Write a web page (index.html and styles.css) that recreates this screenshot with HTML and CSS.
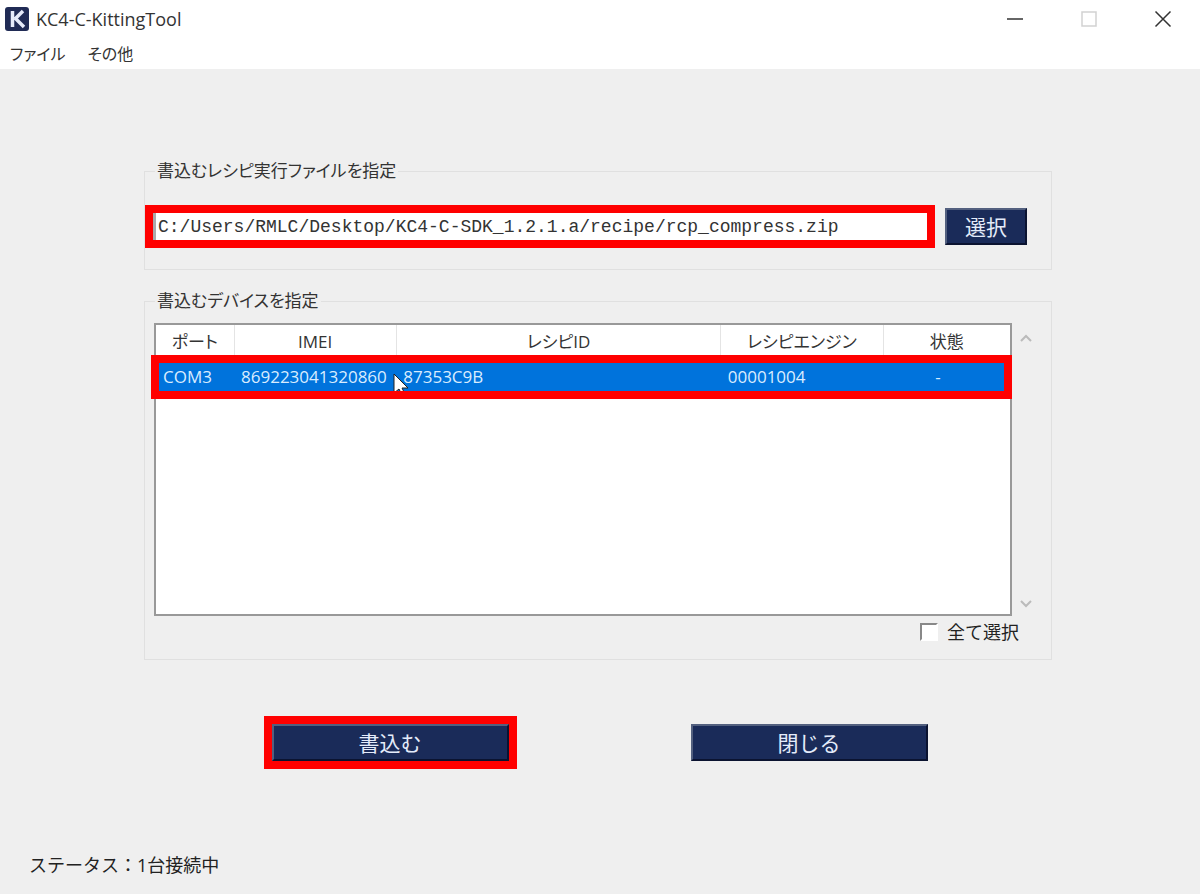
FILE: index.html
```html
<!DOCTYPE html>
<html lang="ja">
<head>
    <meta charset="UTF-8">
    <meta name="viewport" content="width=device-width, initial-scale=1.0">
    <title>KC4-C-KittingTool</title>
    <link rel="stylesheet" href="styles.css">
</head>
<body>
    <!-- Title bar -->
    <header class="titlebar">
        <svg class="app-icon" viewBox="0 0 26 26" aria-hidden="true">
            <rect x="1" y="1" width="24" height="24" rx="3" fill="#202b55"/>
            <path d="M8.500 5v16M19 5l-8 8M11 12l9 9" fill="none" stroke="#e6ebfa" stroke-width="3.500"/>
        </svg>
        <h1 class="title">KC4-C-KittingTool</h1>
        <div class="window-buttons">
            <button type="button" class="window-button" aria-label="最小化">
                <svg viewBox="0 0 18 18"><path d="M1 9h16" stroke="#333" stroke-width="1.500"/></svg>
            </button>
            <button type="button" class="window-button" aria-label="最大化" disabled>
                <svg viewBox="0 0 18 18"><rect x="2" y="2" width="14" height="14" fill="none" stroke="#d2d2d2" stroke-width="1.500"/></svg>
            </button>
            <button type="button" class="window-button" aria-label="閉じる">
                <svg viewBox="0 0 18 18"><path d="M1.500 1.500l15 15M16.500 1.500l-15 15" stroke="#333" stroke-width="1.500"/></svg>
            </button>
        </div>
    </header>
    <nav class="menubar">
        <button type="button" class="menu-item">ファイル</button>
        <button type="button" class="menu-item">その他</button>
    </nav>

    <main class="content">
        <!-- Recipe file -->
        <fieldset class="group">
            <legend>書込むレシピ実行ファイルを指定</legend>
            <div class="file-row">
                <div class="marked file-field">
                    <input type="text" class="file-input" aria-label="レシピ実行ファイル" value="C:/Users/RMLC/Desktop/KC4-C-SDK_1.2.1.a/recipe/rcp_compress.zip">
                </div>
                <button type="button" class="button button-select">選択</button>
            </div>
        </fieldset>

        <!-- Device list -->
        <fieldset class="group">
            <legend>書込むデバイスを指定</legend>
            <div class="device-area">
                <div class="device-list">
                    <table class="devices">
                        <thead>
                            <tr>
                                <th class="col-port">ポート</th>
                                <th class="col-imei">IMEI</th>
                                <th class="col-recipe">レシピID</th>
                                <th class="col-engine">レシピエンジン</th>
                                <th class="col-state">状態</th>
                            </tr>
                        </thead>
                        <tbody>
                            <tr class="selected">
                                <td>COM3</td>
                                <td>869223041320860</td>
                                <td>87353C9B
                                    <svg class="cursor" viewBox="0 0 16 22" aria-hidden="true"><path d="M1 1v19l5-4 3 6 3-1-3-6h6z" fill="#fff" stroke="#222" stroke-width="1"/></svg>
                                </td>
                                <td>00001004</td>
                                <td class="state">-</td>
                            </tr>
                        </tbody>
                    </table>
                    <div class="row-mark"></div>
                </div>
                <div class="scrollbar">
                    <svg viewBox="0 0 12 10"><path d="M1 8l5-5 5 5" fill="none" stroke="#bbb" stroke-width="2"/></svg>
                    <svg viewBox="0 0 12 10"><path d="M1 2l5 5 5-5" fill="none" stroke="#bbb" stroke-width="2"/></svg>
                </div>
            </div>
            <label class="select-all"><input type="checkbox">全て選択</label>
        </fieldset>

        <div class="actions">
            <div class="marked">
                <button type="button" class="button button-wide">書込む</button>
            </div>
            <button type="button" class="button button-wide">閉じる</button>
        </div>
    </main>

    <footer class="status">ステータス：1台接続中</footer>
</body>
</html>
```
FILE: styles.css
```css
* {
    box-sizing: border-box;
}
body {
    margin: 0;
    min-height: 100vh;
    display: flex;
    flex-direction: column;
    background-color: #efefef;
    color: #333;
    font-family: "Open Sans", "Noto Sans CJK JP", sans-serif;
    font-size: 18px;
    line-height: 26px;
}
button,
input {
    font-family: inherit;
    font-size: inherit;
    color: inherit;
}

/* Title bar and menu */
.titlebar {
    display: flex;
    align-items: center;
    height: 38px;
    padding-left: 4px;
    background-color: #fff;
}
.app-icon {
    width: 26px;
    height: 26px;
}
.title {
    margin: 0 0 0 6px;
    font-size: 18px;
    font-weight: 400;
}
.window-buttons {
    display: flex;
    margin-left: auto;
}
.window-button {
    display: flex;
    align-items: center;
    justify-content: center;
    width: 74px;
    height: 38px;
    padding: 0;
    border: none;
    background: none;
}
.window-button svg {
    width: 18px;
    height: 18px;
}
.menubar {
    display: flex;
    gap: 22px;
    height: 31px;
    padding-left: 10px;
    background-color: #fff;
}
.menu-item {
    padding: 0;
    border: none;
    background: none;
    font-size: 16px;
    line-height: 30px;
    font-feature-settings: "palt";
}

/* Groups */
.content {
    padding: 89px 148px 0 144px;
}
.group {
    min-width: 0;
    margin: 0 0 18px;
    padding: 0;
    border: 1px solid #e0e0e0;
}
.group legend {
    margin-left: 10px;
    padding: 0 2px;
    font-size: 17px;
    font-feature-settings: "palt";
}
.marked {
    border: 8px solid #f00;
}
.file-row {
    display: flex;
    align-items: center;
    gap: 10px;
    padding: 21px 24px 21px 0;
}
.file-field {
    flex: 1;
    display: flex;
}
.file-input {
    width: 100%;
    height: 27px;
    padding: 0 2px;
    border: none;
    border-left: 3px solid #aaa;
    background-color: #fff;
    font-family: "Liberation Mono", monospace;
}
.button {
    height: 37px;
    padding: 0;
    border: 2px solid;
    border-color: #53607f #0b1330 #0b1330 #53607f;
    background-color: #1a2b59;
    color: #e4ebfa;
    font-size: 21px;
    line-height: 30px;
}
.button-select {
    width: 82px;
}

/* Device table */
.device-area {
    display: flex;
    padding: 9px 12px 0 9px;
}
.device-list {
    position: relative;
    flex: 1;
    min-height: 293px;
    border: 2px solid #999;
    background-color: #fff;
}
.devices {
    width: 100%;
    table-layout: fixed;
    border-collapse: collapse;
}
.devices th {
    height: 34px;
    padding: 0;
    border-right: 1px solid #e4e4e4;
    font-size: 17px;
    font-weight: 400;
    font-feature-settings: "palt";
}
.devices th:last-child {
    border-right: none;
}
.devices td {
    position: relative;
    height: 36px;
    padding: 0 7px;
    font-size: 17px;
}
.col-port {
    width: 78px;
}
.col-imei {
    width: 19%;
}
.col-recipe {
    width: 38%;
}
.col-engine {
    width: 19%;
}
.selected {
    background-color: #0073dc;
    color: #d9ecff;
}
.devices .state {
    padding-right: 24px;
    text-align: center;
}
.cursor {
    position: absolute;
    top: 14px;
    left: -3px;
    width: 16px;
    height: 22px;
}
.row-mark {
    position: absolute;
    top: 30px;
    left: -5px;
    right: -2px;
    height: 44px;
    border: 8px solid #f00;
}
.scrollbar {
    display: flex;
    flex-direction: column;
    justify-content: space-between;
    align-items: center;
    width: 27px;
    padding: 10px 0 7px;
}
.scrollbar svg {
    width: 12px;
    height: 10px;
}
.select-all {
    display: flex;
    justify-content: flex-end;
    align-items: center;
    gap: 9px;
    padding: 3px 32px 14px 0;
    color: #222;
}
.select-all input {
    appearance: none;
    width: 18px;
    height: 18px;
    margin: 0;
    border: 2px solid;
    border-color: #888 #fff #fff #888;
    background-color: #fff;
}

/* Bottom */
.actions {
    display: flex;
    justify-content: center;
    align-items: center;
    gap: 174px;
    margin-top: 56px;
    padding-right: 5px;
}
.actions .marked {
    display: flex;
}
.button-wide {
    width: 237px;
}
.status {
    margin-top: auto;
    padding: 0 29px 16px;
    color: #222;
}
```
